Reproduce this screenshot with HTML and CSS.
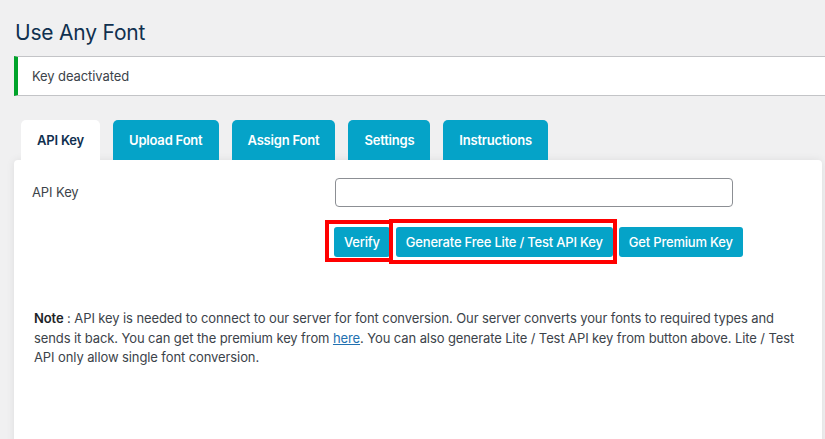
FILE: index.html
```html
<!DOCTYPE html>
<html lang="en">
<head>
    <meta charset="UTF-8">
    <meta name="viewport" content="width=device-width, initial-scale=1.0">
    <title>Use Any Font</title>
    <link rel="stylesheet" href="styles.css">
</head>
<body>
    <div class="wrap">
        <h1>Use Any Font</h1>

        <div class="notice">
            <p>Key deactivated</p>
        </div>

        <nav class="tabs">
            <a href="#" class="tab active">API Key</a>
            <a href="#" class="tab">Upload Font</a>
            <a href="#" class="tab">Assign Font</a>
            <a href="#" class="tab">Settings</a>
            <a href="#" class="tab">Instructions</a>
        </nav>

        <div class="panel">
            <div class="form-row">
                <label for="api-key">API Key</label>
                <div class="field">
                    <input type="text" id="api-key" class="key-input">
                    <div class="actions">
                        <button class="btn marked marked-verify">Verify</button>
                        <button class="btn marked marked-lite">Generate Free Lite / Test API Key</button>
                        <button class="btn">Get Premium Key</button>
                    </div>
                </div>
            </div>

            <p class="note"><strong>Note</strong> : API key is needed to connect to our server for font conversion. Our server converts your fonts to required types and sends it back. You can get the premium key from <a href="#">here</a>. You can also generate Lite / Test API key from button above. Lite / Test API only allow single font conversion.</p>
        </div>
    </div>
</body>
</html>
```

FILE: styles.css
```css
body { margin: 0; background: #f0f0f1; font-family: Inter, "Liberation Sans", sans-serif; font-size: 13px; letter-spacing: -0.1px; color: #3c434a; overflow: hidden; }
.wrap { padding: 18px 3px 0 14px; }
h1 { margin: 0 0 8px 1px; font-size: 21px; font-weight: 400; letter-spacing: -0.2px; line-height: 30px; color: #10304f; }
.notice { margin-right: -10px; background: #fff; border: 1px solid #c3c4c7; border-left: 4px solid #00a32a; padding: 0 14px; }
.notice p { margin: 0; line-height: 38px; color: #3c434a; }
.tabs { display: flex; gap: 13px; margin: 24px 0 0 7px; }
.tab { display: block; padding: 0 16px; height: 40px; line-height: 40px; background: #05a3c8; color: #fff; font-weight: 600; letter-spacing: -0.2px; text-decoration: none; border-radius: 5px 5px 0 0; }
.tab.active { background: #fff; color: #10304f; }
.panel { background: #fff; border-radius: 4px; box-shadow: 0 0 8px rgba(0, 0, 0, 0.08); padding: 18px 18px 0 18px; min-height: 300px; }
.form-row { display: flex; }
.form-row label { width: 303px; padding-top: 6px; color: #3c434a; }
.field { display: flex; flex-direction: column; }
.key-input { width: 398px; height: 29px; box-sizing: border-box; border: 1px solid #8c8f94; border-radius: 4px; margin: 0; }
.actions { display: flex; gap: 6px; margin-top: 20px; margin-left: -1px; }
.btn { position: relative; height: 30px; padding: 0 10px; border: 0; border-radius: 3px; background: #05a3c8; color: #fff; font-family: inherit; font-size: 13px; font-weight: 500; letter-spacing: -0.2px; }
/* red annotation boxes drawn over the first two buttons */
.marked::after { content: ""; position: absolute; border: 4px solid #ff0000; pointer-events: none; }
.marked-verify::after { top: -7px; bottom: -5px; left: -9px; right: -3px; }
.marked-lite::after { top: -8px; bottom: -7px; left: -7px; right: -4px; }
.note { margin: 52px 0 0 2px; line-height: 19.5px; }
.note strong { font-weight: 600; color: #1d2327; }
.note a { color: #2271b1; }
```
